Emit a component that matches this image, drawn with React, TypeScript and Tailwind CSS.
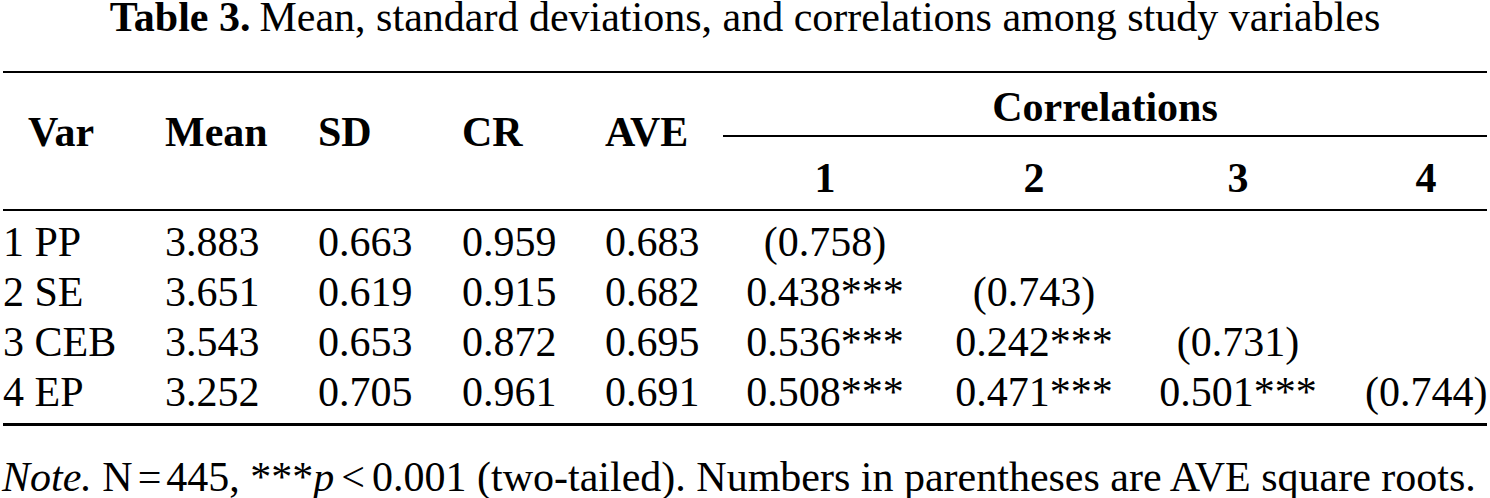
import React from 'react';

const cols = 'grid grid-cols-[162px_153px_144px_143px_118px_204px_214px_194px_152px]';

const rows = [
  { name: '1 PP', mean: '3.883', sd: '0.663', cr: '0.959', ave: '0.683', corr: ['(0.758)', '', '', ''] },
  { name: '2 SE', mean: '3.651', sd: '0.619', cr: '0.915', ave: '0.682', corr: ['0.438***', '(0.743)', '', ''] },
  { name: '3 CEB', mean: '3.543', sd: '0.653', cr: '0.872', ave: '0.695', corr: ['0.536***', '0.242***', '(0.731)', ''] },
  { name: '4 EP', mean: '3.252', sd: '0.705', cr: '0.961', ave: '0.691', corr: ['0.508***', '0.471***', '0.501***', '(0.744)'] },
];

export default function App() {
  return (
    <div className="w-[1490px] h-[498px] bg-white text-black overflow-hidden">
      <div className="font-['Liberation_Serif','Times_New_Roman',serif] text-[42px]">
        {/* caption */}
        <div className="h-[34px] leading-[34px] text-center whitespace-nowrap">
          <span className="font-bold">Table 3.</span>
          <span className="ml-[9px]">Mean, standard deviations, and correlations among study variables</span>
        </div>

        <div className="ml-[3px] w-[1484px] mt-[37px]">
          <div className="h-[2px] bg-black" />

          {/* header */}
          <div className={`${cols} font-bold`}>
            <div className="row-span-2 pt-[39px] pl-[25px] leading-[40px]">Var</div>
            <div className="row-span-2 pt-[39px] leading-[40px]">Mean</div>
            <div className="row-span-2 pt-[39px] leading-[40px]">SD</div>
            <div className="row-span-2 pt-[39px] leading-[40px]">CR</div>
            <div className="row-span-2 pt-[39px] leading-[40px]">AVE</div>
            <div className="col-span-4 pt-[14px] pb-[8px] leading-[40px] text-center border-b-2 border-black">
              Correlations
            </div>
            <div className="pt-[21px] pb-[11px] leading-[40px] text-center">1</div>
            <div className="pt-[21px] pb-[11px] leading-[40px] text-center">2</div>
            <div className="pt-[21px] pb-[11px] leading-[40px] text-center">3</div>
            <div className="pt-[21px] pb-[11px] leading-[40px] text-center pl-[30px]">4</div>
          </div>

          <div className="h-[2px] bg-black" />

          {/* body */}
          <div className="pt-[6px] pb-[6px]">
            {rows.map((r) => (
              <div key={r.name} className={`${cols} h-[50px] leading-[50px] whitespace-nowrap`}>
                <div>{r.name}</div>
                <div>{r.mean}</div>
                <div>{r.sd}</div>
                <div>{r.cr}</div>
                <div>{r.ave}</div>
                <div className="text-center">{r.corr[0]}</div>
                <div className="text-center">{r.corr[1]}</div>
                <div className="text-center">{r.corr[2]}</div>
                <div className="text-center pl-[30px]">{r.corr[3]}</div>
              </div>
            ))}
          </div>

          <div className="h-[3px] bg-black" />
        </div>

        {/* note */}
        <div className="mt-[33px] ml-[2px] h-[36px] leading-[36px] whitespace-nowrap">
          <span className="italic">Note.</span> N<span className="mx-[5px]">=</span>445, ***<span className="italic">p</span>
          <span className="mx-[7px]">&lt;</span>0.001 (two-tailed). Numbers in parentheses are AVE square roots.
        </div>
      </div>
    </div>
  );
}
